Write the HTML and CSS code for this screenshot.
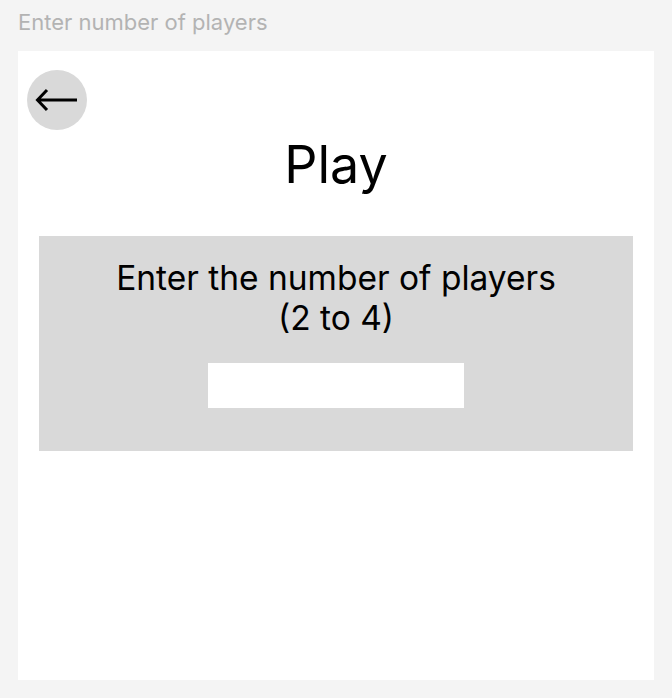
FILE: index.html
```html
<!DOCTYPE html>
<html lang="en">
<head>
<meta charset="utf-8">
<title>Enter number of players</title>
<link rel="stylesheet" href="styles.css">
</head>
<body>
<div class="label">Enter number of players</div>
<main class="frame">
  <button class="back" aria-label="Back">
    <svg width="60" height="60" viewBox="0 0 60 60" aria-hidden="true">
      <path d="M10.5 30 H50 M20 20 L10.5 30 L20 40" fill="none" stroke="#000" stroke-width="3" stroke-linecap="butt" stroke-linejoin="miter"/>
    </svg>
  </button>
  <h1 class="title">Play</h1>
  <section class="panel">
    <p class="prompt">Enter the number of players<br>(2 to 4)</p>
    <input class="count" type="text" aria-label="Number of players">
  </section>
</main>
</body>
</html>
```

FILE: styles.css
```css
* { box-sizing: border-box; }
html, body { margin: 0; padding: 0; }
body {
  background: #f4f4f4;
  font-family: Inter, "Noto Sans", sans-serif;
  width: 672px;
  height: 698px;
  overflow: hidden;
}
.label {
  padding: 9px 0 0 18px;
  height: 51px;
  font-size: 22px;
  line-height: 27px;
  color: #b3b3b3;
}
.frame {
  margin-left: 18px;
  width: 636px;
  height: 629px;
  background: #fff;
  display: flex;
  flex-direction: column;
  align-items: center;
  padding: 19px 21px 0;
}
.back {
  align-self: flex-start;
  margin-left: -12px;
  width: 60px;
  height: 60px;
  border: 0;
  padding: 0;
  border-radius: 50%;
  background: #d9d9d9;
  display: flex;
  flex-shrink: 0;
}
.title {
  margin: 3px 0 0;
  font-size: 52px;
  font-weight: 400;
  line-height: 63px;
  color: #000;
}
.panel {
  margin-top: 40px;
  width: 594px;
  height: 215px;
  flex-shrink: 0;
  background: #d9d9d9;
  display: flex;
  flex-direction: column;
  align-items: center;
  padding-top: 22px;
}
.prompt {
  margin: 0;
  font-size: 33.5px;
  line-height: 40px;
  text-align: center;
  color: #000;
}
.count {
  margin-top: 25px;
  width: 256px;
  height: 45px;
  flex-shrink: 0;
  border: 0;
  background: #fff;
  outline: none;
}
```
